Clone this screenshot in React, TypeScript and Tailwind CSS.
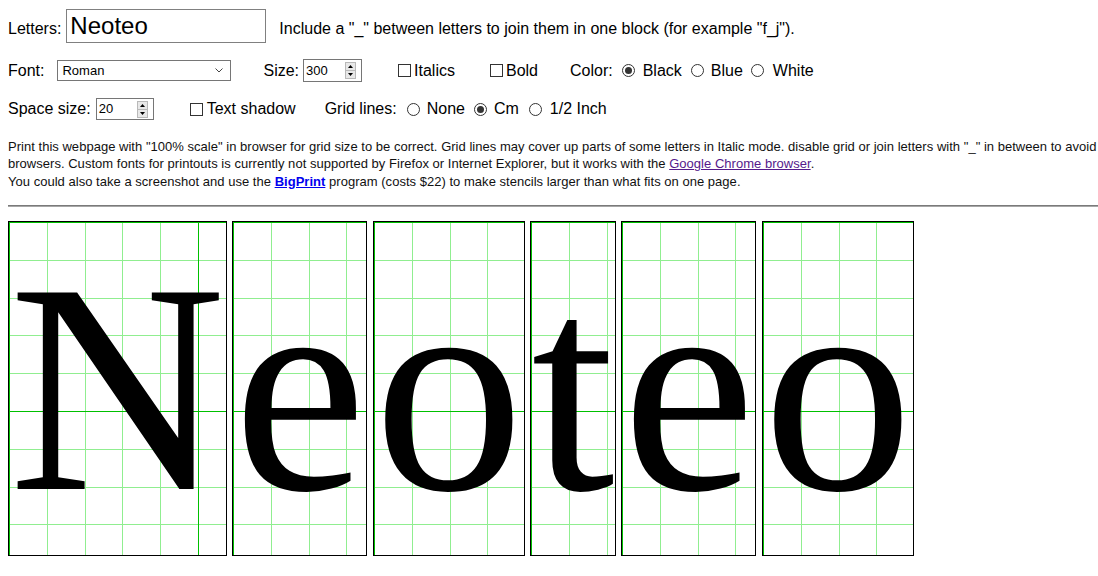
import React from "react";

const CM = 37.8;

// cm grid drawn behind each letter
const Grid = () => {
  const light: React.ReactNode[] = [];
  const dark: React.ReactNode[] = [];
  for (let k = 0; k < 9; k++) {
    const p = Math.round(k * CM) + 0.5;
    const list = k === 0 || k === 5 ? dark : light;
    const stroke = k === 0 || k === 5 ? "#00c000" : "#90ee90";
    list.push(<line key={"v" + k} x1={p} y1={0} x2={p} y2={400} stroke={stroke} strokeWidth={1} />);
    list.push(<line key={"h" + k} x1={0} y1={p} x2={400} y2={p} stroke={stroke} strokeWidth={1} />);
  }
  return (
    <svg className="absolute inset-0 h-full w-full" shapeRendering="crispEdges">
      {light}
      {dark}
    </svg>
  );
};

const Letter = ({ ch }: { ch: string }) => (
  <div className="relative border border-black bg-white">
    <Grid />
    <span className="relative block whitespace-nowrap font-['Liberation_Serif','Times_New_Roman',serif] text-[300px] leading-[333px] text-black">
      {ch}
    </span>
  </div>
);

const Check = ({ className }: { className: string }) => (
  <span className={"inline-block h-[13px] w-[13px] shrink-0 border border-[#333333] bg-white " + className} />
);

const Radio = ({ on, className }: { on?: boolean; className: string }) => (
  <span
    className={
      "flex h-[13px] w-[13px] shrink-0 items-center justify-center rounded-full border border-[#333333] bg-white " +
      className
    }
  >
    {on && <span className="h-[7px] w-[7px] rounded-full bg-[#333333]" />}
  </span>
);

const Spinner = () => (
  <span className="flex h-[17px] w-[11px] flex-col border border-[#b9b9b9] bg-[#e8e8e8]">
    <span className="flex flex-1 items-center justify-center border-b border-[#b9b9b9]">
      <svg width="5" height="3" viewBox="0 0 5 3">
        <path d="M2.5 0L5 3H0z" fill="#000" />
      </svg>
    </span>
    <span className="flex flex-1 items-center justify-center">
      <svg width="5" height="3" viewBox="0 0 5 3">
        <path d="M0 0h5L2.5 3z" fill="#000" />
      </svg>
    </span>
  </span>
);

const NumberBox = ({ value, className }: { value: string; className: string }) => (
  <div className={"flex items-center justify-between border border-[#767676] bg-white pl-[2px] pr-[5px] " + className}>
    <span className="text-[13px] text-black">{value}</span>
    <Spinner />
  </div>
);

const App = () => {
  const letters = ["N", "e", "o", "t", "e", "o"];

  return (
    <div className="h-[576px] w-[1098px] overflow-hidden bg-white font-['Liberation_Sans',Arial,sans-serif] text-[16px] text-black">
      <div className="w-[1120px] pl-2">
        {/* row 1 */}
        <div className="mt-[9px] flex h-[34px] items-baseline">
          <span>Letters:</span>
          <input
            defaultValue="Neoteo"
            className="ml-[5px] h-[34px] w-[200px] border border-[#808080] bg-white pl-[3px] text-[24px] text-black outline-none"
          />
          <span className="ml-[13px]">
            Include a "_" between letters to join them in one block (for example "f_j").
          </span>
        </div>

        {/* row 2 */}
        <div className="mt-[16px] flex h-[23px] items-center whitespace-nowrap">
          <span>Font:</span>
          <div className="ml-[13px] flex h-[21px] w-[174px] items-center justify-between border border-[#767676] bg-white pl-[4px] pr-[7px]">
            <span className="text-[13px]">Roman</span>
            <svg width="8" height="5" viewBox="0 0 8 5">
              <path d="M0.5 0.5L4 4L7.5 0.5" fill="none" stroke="#444" strokeWidth="1" />
            </svg>
          </div>
          <span className="ml-[32px]">Size:</span>
          <NumberBox value="300" className="ml-[4px] h-[23px] w-[59px]" />
          <Check className="ml-[36px]" />
          <span className="ml-[3px]">Italics</span>
          <Check className="ml-[35px]" />
          <span className="ml-[3px]">Bold</span>
          <span className="ml-[32px]">Color:</span>
          <Radio on className="ml-[9px]" />
          <span className="ml-[8px]">Black</span>
          <Radio className="ml-[9px]" />
          <span className="ml-[7px]">Blue</span>
          <Radio className="ml-[8px]" />
          <span className="ml-[9px]">White</span>
        </div>

        {/* row 3 */}
        <div className="mt-[16px] flex h-[22px] items-center whitespace-nowrap">
          <span>Space size:</span>
          <NumberBox value="20" className="ml-[5px] h-[22px] w-[58px]" />
          <Check className="ml-[36px]" />
          <span className="ml-[4px]">Text shadow</span>
          <span className="ml-[29px]">Grid lines:</span>
          <Radio className="ml-[10px]" />
          <span className="ml-[7px]">None</span>
          <Radio on className="ml-[9px]" />
          <span className="ml-[7px]">Cm</span>
          <Radio className="ml-[10px]" />
          <span className="ml-[8px]">1/2 Inch</span>
        </div>

        {/* notes */}
        <div className="mt-[18px] whitespace-nowrap text-[13px] leading-[17.3px] tracking-[0.025px] text-[#111]">
          <div>
            Print this webpage with "100% scale" in browser for grid size to be correct. Grid lines may cover up parts of
            some letters in Italic mode. disable grid or join letters with "_" in between to avoid
          </div>
          <div>
            browsers. Custom fonts for printouts is currently not supported by Firefox or Internet Explorer, but it works
            with the{" "}
            <a href="#" className="text-[#551a8b] underline">
              Google Chrome browser
            </a>
            .
          </div>
          <div>
            You could also take a screenshot and use the{" "}
            <a href="#" className="font-bold text-[#0000ee] underline">
              BigPrint
            </a>{" "}
            program (costs $22) to make stencils larger than what fits on one page.
          </div>
        </div>

        <div className="mt-[15px] h-[2px] border-t border-[#7a7a7a] bg-[#a6a6a6]" />

        {/* letters */}
        <div className="mt-[14px] flex items-start gap-[5.5px]">
          {letters.map((ch, i) => (
            <Letter key={i} ch={ch} />
          ))}
        </div>
      </div>
    </div>
  );
};

export default App;
